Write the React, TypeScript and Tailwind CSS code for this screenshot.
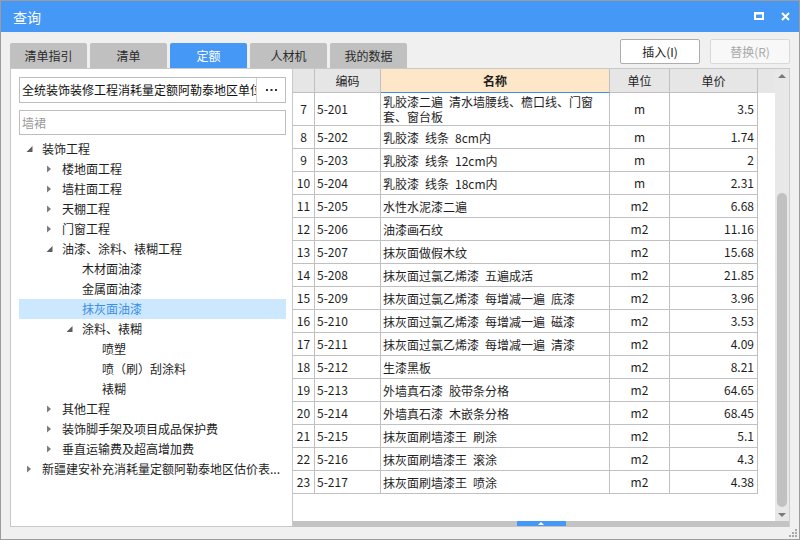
import React from "react";

type TreeNode = { label: string; level: number; state: "open" | "closed" | "leaf"; selected?: boolean };

const tree: TreeNode[] = [
  { label: "装饰工程", level: 0, state: "open" },
  { label: "楼地面工程", level: 1, state: "closed" },
  { label: "墙柱面工程", level: 1, state: "closed" },
  { label: "天棚工程", level: 1, state: "closed" },
  { label: "门窗工程", level: 1, state: "closed" },
  { label: "油漆、涂料、裱糊工程", level: 1, state: "open" },
  { label: "木材面油漆", level: 2, state: "leaf" },
  { label: "金属面油漆", level: 2, state: "leaf" },
  { label: "抹灰面油漆", level: 2, state: "leaf", selected: true },
  { label: "涂料、裱糊", level: 2, state: "open" },
  { label: "喷塑", level: 3, state: "leaf" },
  { label: "喷（刷）刮涂料", level: 3, state: "leaf" },
  { label: "裱糊", level: 3, state: "leaf" },
  { label: "其他工程", level: 1, state: "closed" },
  { label: "装饰脚手架及项目成品保护费", level: 1, state: "closed" },
  { label: "垂直运输费及超高增加费", level: 1, state: "closed" },
  { label: "新疆建安补充消耗量定额阿勒泰地区估价表...", level: 0, state: "closed" },
];

const indent = ["pl-[7px]", "pl-[27px]", "pl-[47px]", "pl-[67px]"];

type Row = { n: string; code: string; name: React.ReactNode; unit: string; price: string; tall?: boolean };

const S = "\u2002";

const rows: Row[] = [
  { n: "7", code: "5-201", name: (<>乳胶漆二遍{S}清水墙腰线、檐口线、门窗<br />套、窗台板</>), unit: "m", price: "3.5", tall: true },
  { n: "8", code: "5-202", name: `乳胶漆${S}线条${S}8cm内`, unit: "m", price: "1.74" },
  { n: "9", code: "5-203", name: `乳胶漆${S}线条${S}12cm内`, unit: "m", price: "2" },
  { n: "10", code: "5-204", name: `乳胶漆${S}线条${S}18cm内`, unit: "m", price: "2.31" },
  { n: "11", code: "5-205", name: "水性水泥漆二遍", unit: "m2", price: "6.68" },
  { n: "12", code: "5-206", name: "油漆画石纹", unit: "m2", price: "11.16" },
  { n: "13", code: "5-207", name: "抹灰面做假木纹", unit: "m2", price: "15.68" },
  { n: "14", code: "5-208", name: `抹灰面过氯乙烯漆${S}五遍成活`, unit: "m2", price: "21.85" },
  { n: "15", code: "5-209", name: `抹灰面过氯乙烯漆${S}每增减一遍${S}底漆`, unit: "m2", price: "3.96" },
  { n: "16", code: "5-210", name: `抹灰面过氯乙烯漆${S}每增减一遍${S}磁漆`, unit: "m2", price: "3.53" },
  { n: "17", code: "5-211", name: `抹灰面过氯乙烯漆${S}每增减一遍${S}清漆`, unit: "m2", price: "4.09" },
  { n: "18", code: "5-212", name: "生漆黑板", unit: "m2", price: "8.21" },
  { n: "19", code: "5-213", name: `外墙真石漆${S}胶带条分格`, unit: "m2", price: "64.65" },
  { n: "20", code: "5-214", name: `外墙真石漆${S}木嵌条分格`, unit: "m2", price: "68.45" },
  { n: "21", code: "5-215", name: `抹灰面刷墙漆王${S}刷涂`, unit: "m2", price: "5.1" },
  { n: "22", code: "5-216", name: `抹灰面刷墙漆王${S}滚涂`, unit: "m2", price: "4.3" },
  { n: "23", code: "5-217", name: `抹灰面刷墙漆王${S}喷涂`, unit: "m2", price: "4.38" },
];

const tabs = ["清单指引", "清单", "定额", "人材机", "我的数据"];

function Arrow({ state }: { state: TreeNode["state"] }) {
  if (state === "closed")
    return (
      <svg width="8" height="10" viewBox="0 0 8 10">
        <polygon points="1,1.5 5,5 1,8.5" fill="#7c7c7c" />
      </svg>
    );
  if (state === "open")
    return (
      <svg width="8" height="10" viewBox="0 0 8 10">
        <polygon points="6.5,2 6.5,8 0.5,8" fill="#5e5e5e" />
      </svg>
    );
  return null;
}

export default function App() {
  return (
    <div className="w-[800px] h-[540px] border border-[#9c9c9c] bg-[#f0f0f0] flex flex-col overflow-hidden font-['Noto_Sans_CJK_SC',sans-serif] text-[12px] text-[#1e1e1e]">
      {/* title bar */}
      <div className="h-[31px] shrink-0 bg-[#4598f6] flex items-center pl-[12px] pr-[9px]">
        <span className="text-white text-[14px] leading-none">查询</span>
        <div className="flex-1" />
        <svg width="10" height="8" viewBox="0 0 10 8" className="mr-[17px] mb-[1px]">
          <path fillRule="evenodd" d="M0 0H10V8H0Z M2 2.5H8V6H2Z" fill="#ffffff" />
        </svg>
        <svg width="9" height="9" viewBox="0 0 9 9" className="mb-[1px]">
          <path d="M1 1L8 8M8 1L1 8" stroke="#ffffff" strokeWidth="2" />
        </svg>
      </div>

      {/* toolbar */}
      <div className="h-[36px] shrink-0 flex pl-[9px] pr-[9px]">
        <div className="flex items-end gap-[3px]">
          {tabs.map((t) => (
            <div
              key={t}
              className={`w-[77px] h-[25px] rounded-t-[2px] flex items-center justify-center text-[12px] ${
                t === "定额" ? "bg-[#4598f6] text-white" : "bg-[#c0c0c0] text-[#2a2a2a]"
              }`}
            >
              {t}
            </div>
          ))}
        </div>
        <div className="flex-1" />
        <div className="flex gap-[10px] pt-[7px]">
          <div className="w-[80px] h-[25px] bg-white border border-[#adadad] rounded-[2px] flex items-center justify-center text-[#222]">
            插入(I)
          </div>
          <div className="w-[80px] h-[25px] bg-[#f8f8f8] border border-[#d8d8d8] rounded-[2px] flex items-center justify-center text-[#a8a8a8]">
            替换(R)
          </div>
        </div>
      </div>

      {/* content */}
      <div className="h-[459px] shrink-0 flex pl-[9px]">
        {/* left panel */}
        <div className="w-[283px] h-full bg-white border border-[#c8c8c8] pt-[8px] pl-[8px] pr-[6px] flex flex-col">
          <div className="h-[26px] w-[267px] border border-[#bdbdbd] flex">
            <div className="flex-1 overflow-hidden whitespace-nowrap pl-[2px] flex items-center text-[#111]">
              全统装饰装修工程消耗量定额阿勒泰地区单位估价表
            </div>
            <div className="w-[29px] border-l border-[#d4d4d4] flex items-center justify-center">
              <svg width="11" height="3" viewBox="0 0 11 3">
                <rect x="0" y="0" width="2" height="2" fill="#333" />
                <rect x="4.5" y="0" width="2" height="2" fill="#333" />
                <rect x="9" y="0" width="2" height="2" fill="#333" />
              </svg>
            </div>
          </div>
          <div className="mt-[7px] h-[25px] w-[267px] border border-[#bdbdbd] flex items-center pl-[2px] text-[#9a9a9a]">
            墙裙
          </div>
          <div className="mt-[4px] w-[267px] flex flex-col">
            {tree.map((n, i) => (
              <div
                key={i}
                className={`h-[20px] flex items-center whitespace-nowrap ${indent[n.level]} ${
                  n.selected ? "bg-[#cce8ff] text-[#3a8ee6]" : "text-[#1e1e1e]"
                }`}
              >
                <div className="w-[16px] flex items-center">
                  <Arrow state={n.state} />
                </div>
                <span>{n.label}</span>
              </div>
            ))}
          </div>
        </div>

        {/* right panel */}
        <div className="w-[497px] h-full border-t border-r border-t-[#c8c8c8] border-r-[#cfcfcf] flex flex-col">
          <div className="flex-1 flex min-h-0">
            <div className="flex-1 bg-white flex flex-col font-['SimSun','Noto_Sans_CJK_SC',sans-serif]">
              {/* header */}
              <div className="flex h-[24px] bg-[#e6e6e6]">
                <div className="w-[22px] border-r border-b border-[#c0c0c0]" />
                <div className="w-[66px] border-r border-b border-[#c0c0c0] flex items-center justify-center">编码</div>
                <div className="w-[229px] border-r border-b border-r-[#c0c0c0] border-b-[#3d8ee8] bg-[#fee7c8] flex items-center justify-center font-bold">
                  名称
                </div>
                <div className="w-[60px] border-r border-b border-[#c0c0c0] flex items-center justify-center">单位</div>
                <div className="w-[88px] border-r border-b border-[#c0c0c0] flex items-center justify-center">单价</div>
              </div>
              {rows.map((r) => (
                <div key={r.n} className={`flex ${r.tall ? "h-[33px]" : "h-[23px]"}`}>
                  <div className="w-[22px] border-r border-b border-[#c0c0c0] flex items-center justify-center">{r.n}</div>
                  <div className="w-[66px] border-r border-b border-[#c0c0c0] flex items-center pl-[2px]">{r.code}</div>
                  <div className="w-[229px] border-r border-b border-[#c0c0c0] flex items-center pl-[2px] leading-[15px] whitespace-nowrap">
                    <span>{r.name}</span>
                  </div>
                  <div className="w-[60px] border-r border-b border-[#c0c0c0] flex items-center justify-center">{r.unit}</div>
                  <div className="w-[88px] border-r border-b border-[#c0c0c0] flex items-center justify-end pr-[3px]">{r.price}</div>
                </div>
              ))}
            </div>
            {/* vertical scrollbar */}
            <div className="w-[14px] bg-[#e8e8e8] flex flex-col items-center">
              <svg width="8" height="4" viewBox="0 0 8 4" className="mt-[5px]">
                <polygon points="0,4 4,0 8,4" fill="#7a7a7a" />
              </svg>
              <div className="mt-[115px] w-[10px] h-[314px] rounded-full bg-[#c1c1c1]" />
              <svg width="8" height="4" viewBox="0 0 8 4" className="mt-[6px]">
                <polygon points="0,0 8,0 4,4" fill="#7a7a7a" />
              </svg>
            </div>
          </div>
          {/* bottom splitter bar */}
          <div className="h-[6px] bg-[#c3c3c3] flex justify-center">
            <div className="w-[49px] h-[5px] bg-[#4598f6] flex items-center justify-center">
              <svg width="6" height="3" viewBox="0 0 6 3">
                <polygon points="0,3 3,0 6,3" fill="#ffffff" />
              </svg>
            </div>
          </div>
        </div>
      </div>

      {/* footer */}
      <div className="flex-1 flex justify-end items-end pr-[1px] pb-[1px]">
        <svg width="9" height="9" viewBox="0 0 9 9">
          <rect x="6" y="0" width="2" height="2" fill="#a8a8a8" />
          <rect x="3" y="3" width="2" height="2" fill="#a8a8a8" />
          <rect x="6" y="3" width="2" height="2" fill="#a8a8a8" />
          <rect x="0" y="6" width="2" height="2" fill="#a8a8a8" />
          <rect x="3" y="6" width="2" height="2" fill="#a8a8a8" />
          <rect x="6" y="6" width="2" height="2" fill="#a8a8a8" />
        </svg>
      </div>
    </div>
  );
}
